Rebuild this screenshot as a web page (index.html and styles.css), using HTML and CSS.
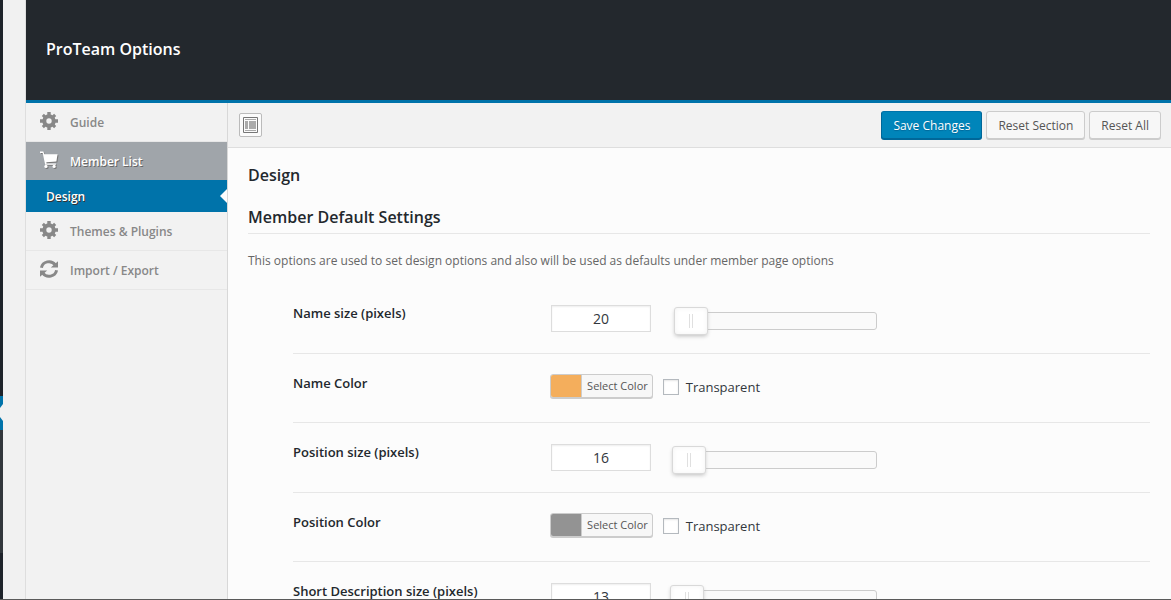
FILE: index.html
```html
<!DOCTYPE html>
<html lang="en">
<head>
<meta charset="utf-8">
<title>ProTeam Options</title>
<link rel="stylesheet" href="styles.css">
</head>
<body>
<svg class="sprite" aria-hidden="true">
  <symbol id="gear" viewBox="0 0 18 18">
    <circle class="ring" cx="9" cy="9" r="4.700"/>
    <path d="M7.300 0h3.400v3.500H7.300zM7.300 14.500h3.400V18H7.300zM0 7.300h3.500v3.400H0zM14.500 7.300H18v3.400h-3.500z"/>
    <path transform="rotate(45 9 9)" d="M7.500 .3h3v3.200h-3zM7.500 14.500h3v3.200h-3zM.3 7.500h3.200v3H.3zM14.500 7.500h3.200v3h-3.200z"/>
  </symbol>
  <symbol id="cart" viewBox="0 0 19 18"><path d="M0 0h3.500l1.200 2.800H18.500L17.300 10.500 6.700 11.500l.2 1.100h9.900v1.400H5.500L2.900 2 2.500 1.500H0z"/><circle cx="6.300" cy="15.800" r="1.700"/><circle cx="14.900" cy="15.800" r="1.700"/></symbol>
  <symbol id="refresh" viewBox="0 0 18 18">
    <path class="arc" d="M1.400 7.800A7.700 7.500 0 0 1 15.200 4.800M16.600 10.200A7.700 7.500 0 0 1 2.800 13.200"/>
    <path d="M18 1.200V7.500H10.800zM0 16.800V10.500H7.200z"/>
  </symbol>
</svg>
<div class="page">
  <div class="admin-menu">
    <div class="admin-menu-top"></div>
    <div class="admin-menu-current"><svg viewBox="0 0 3 34" width="3" height="34" aria-hidden="true"><path d="M3 8v17L0 21v-9z"/></svg></div>
    <div class="admin-menu-sub"></div>
    <div class="admin-menu-rest"></div>
  </div>
  <div class="panel">
    <header class="header"><h1>ProTeam Options</h1></header>
    <div class="columns">
      <nav class="sidebar">
        <ul>
          <li><a class="item" href="#guide"><svg class="icon"><use href="#gear"/></svg>Guide</a></li>
          <li>
            <a class="item item-open" href="#members"><svg class="icon icon-cart"><use href="#cart"/></svg>Member List</a>
            <a class="subitem" href="#design">Design</a>
          </li>
          <li><a class="item" href="#themes"><svg class="icon"><use href="#gear"/></svg>Themes &amp; Plugins</a></li>
          <li><a class="item" href="#import"><svg class="icon"><use href="#refresh"/></svg>Import / Export</a></li>
        </ul>
      </nav>
      <main class="main">
        <div class="toolbar">
          <button class="expand" type="button" aria-label="Expand options"><svg width="15" height="16" viewBox="0 0 15 16" aria-hidden="true"><path class="frame" d="M.5.5h14v15H.5z"/><path class="fill" d="M2 2h11v1H2zM2 4h3v8H2zM6 4h7v8H6zM2 13h11v1H2z"/></svg></button>
          <div class="actions">
            <button class="button primary" type="button">Save Changes</button>
            <button class="button" type="button">Reset Section</button>
            <button class="button" type="button">Reset All</button>
          </div>
        </div>
        <div class="content">
          <h2>Design</h2>
          <h3>Member Default Settings</h3>
          <p class="description">This options are used to set design options and also will be used as defaults under member page options</p>
          <form class="fields">
            <div class="row row-size">
              <label class="label" for="name-size">Name size (pixels)</label>
              <div class="control">
                <input class="number" id="name-size" type="text" value="20">
                <input class="slider" type="range" min="7" max="307" value="20" aria-label="Name size">
              </div>
            </div>
            <div class="row row-color">
              <label class="label" for="name-color">Name Color</label>
              <div class="control">
                <button class="picker" id="name-color" type="button"><span class="swatch orange"></span><span class="picker-text">Select Color</span></button>
                <label class="check"><input type="checkbox">Transparent</label>
              </div>
            </div>
            <div class="row row-size">
              <label class="label" for="position-size">Position size (pixels)</label>
              <div class="control">
                <input class="number" id="position-size" type="text" value="16">
                <input class="slider" type="range" min="7" max="307" value="16" aria-label="Position size">
              </div>
            </div>
            <div class="row row-color">
              <label class="label" for="position-color">Position Color</label>
              <div class="control">
                <button class="picker" id="position-color" type="button"><span class="swatch gray"></span><span class="picker-text">Select Color</span></button>
                <label class="check"><input type="checkbox">Transparent</label>
              </div>
            </div>
            <div class="row row-size">
              <label class="label" for="short-size">Short Description size (pixels)</label>
              <div class="control">
                <input class="number" id="short-size" type="text" value="13">
                <input class="slider" type="range" min="7" max="307" value="13" aria-label="Short Description size">
              </div>
            </div>
          </form>
        </div>
      </main>
    </div>
  </div>
</div>
</body>
</html>
```
FILE: styles.css
```css
* { box-sizing: border-box; }
body {
  margin: 0;
  font: 13px/20px "Open Sans", "Noto Sans", sans-serif;
  color: #23282d;
  background: #f1f1f1;
}
h1, h2, h3, p, ul { margin: 0; padding: 0; }
ul { list-style: none; }
a { text-decoration: none; }
button, input { font: inherit; margin: 0; }
.sprite { display: none; }

.page {
  display: flex;
  height: 100vh;
  overflow: hidden;
  border-bottom: 1px solid #5a5a5a;
}

.admin-menu { display: flex; flex-direction: column; flex: none; width: 3px; margin-right: 22px; background: #1e232a; }
.admin-menu-top { height: 396px; }
.admin-menu-current { height: 34px; background: #0073aa; }
.admin-menu-current svg { display: block; fill: #f1f1f1; }
.admin-menu-sub { height: 123px; background: #32373c; }
.admin-menu-rest { flex: 1; }

.panel { flex: 1; min-width: 0; display: flex; flex-direction: column; border-left: 1px solid #dedede; }
.header {
  display: flex;
  align-items: center;
  flex: none;
  height: 103px;
  padding: 0 20px 2px;
  background: #23282d;
  border-bottom: 3px solid #0073aa;
}
.header h1 { font-size: 16px; line-height: 24px; font-weight: 600; color: #fff; }

.columns { display: flex; flex: 1; min-height: 0; }
.sidebar { flex: none; width: 202px; font-size: 12px; background: #f2f2f2; border-right: 1px solid #d8d8d8; }
.item {
  display: flex;
  align-items: center;
  gap: 12px;
  height: 39px;
  padding: 2px 14px 0;
  font-weight: 600;
  color: #888;
  border-bottom: 1px solid #e7e7e7;
}
.icon { flex: none; width: 18px; height: 18px; margin-bottom: 4px; fill: #888; }
.ring { fill: none; stroke: #888; stroke-width: 4px; }
.arc { fill: none; stroke: #888; stroke-width: 3px; }
.item-open {
  height: 38px;
  color: #fff;
  background: #a0a5aa;
  border-bottom: 0;
  text-shadow: 1px 1px #666;
}
.icon-cart { fill: #fff; filter: drop-shadow(1px 1px 0 #777); }
.subitem {
  position: relative;
  display: block;
  padding: 7px 20px 5px;
  font-weight: 600;
  color: #fff;
  background: #0073aa;
  text-shadow: 1px 1px #333;
}
.subitem::after {
  content: "";
  position: absolute;
  top: 9px;
  right: 0;
  border: 7px solid transparent;
  border-left-width: 0;
  border-right-color: #fcfcfc;
}

.main { flex: 1; min-width: 0; overflow: hidden; background: #fcfcfc; }
.toolbar {
  display: flex;
  justify-content: space-between;
  align-items: flex-start;
  height: 45px;
  padding: 8px 10px 0 11px;
  background: #f2f2f2;
  border-bottom: 1px solid #dedede;
}
.expand {
  display: flex;
  align-items: center;
  justify-content: center;
  width: 23px;
  height: 24px;
  margin-top: 2px;
  padding: 0;
  background: #fbfbfb;
  border: 1px solid #bbb;
  border-radius: 2px;
}
.frame { fill: none; stroke: #777; }
.fill { fill: #aaa; }
.actions { display: flex; gap: 4px; }
.button {
  height: 28px;
  padding: 1px 11px 0;
  font-size: 12px;
  line-height: 26px;
  color: #555;
  background: #f7f7f7;
  border: 1px solid #ccc;
  border-radius: 3px;
  box-shadow: 0 1px #ccc;
}
.primary {
  color: #fff;
  background: #0085ba;
  border-color: #0073aa #006799 #006799;
  box-shadow: 0 1px #006799;
  text-shadow: 0 1px 1px #006799;
}

.content { padding: 15px 21px 0 20px; }
h2, h3 { font-size: 16px; line-height: 24px; font-weight: 600; }
h3 { margin-top: 18px; padding-bottom: 4px; border-bottom: 1px solid #e7e7e7; }
.description { margin-top: 17px; font-size: 12px; color: #666; }
.fields { margin: 13px 0 0 45px; }
.row { display: flex; border-bottom: 1px solid #e7e7e7; }
.row-size { height: 70px; }
.row-color { height: 69px; }
.label { width: 30%; padding-top: 19px; font-weight: 600; }
.control { display: flex; flex: 1; align-items: flex-start; }
.number {
  width: 100px;
  height: 27px;
  margin: 21px 0 0 1px;
  padding: 0 5px;
  font-size: 14px;
  text-align: center;
  color: #32373c;
  background: #fff;
  border: 1px solid #ddd;
  box-shadow: inset 0 1px 2px rgba(0, 0, 0, .07);
}
.slider {
  appearance: none;
  width: 194px;
  height: 28px;
  margin: 23px 0 0 32px;
  background: none;
}
.slider::-webkit-slider-runnable-track {
  height: 18px;
  background: #fafafa;
  border: 1px solid #ccc;
  border-radius: 3px;
}
.slider::-webkit-slider-thumb {
  appearance: none;
  width: 34px;
  height: 28px;
  margin: -6px 0 0 -17px;
  border: 1px solid #d9d9d9;
  border-radius: 3px;
  background:
    linear-gradient(#e0e0e0, #e0e0e0) 14px 6px / 1px 14px no-repeat,
    linear-gradient(#e0e0e0, #e0e0e0) 17px 6px / 1px 14px no-repeat,
    #fff;
  box-shadow: inset 0 0 5px #f2f2f2, 0 2px 4px -1px #bbb;
}
.picker {
  display: flex;
  height: 24px;
  margin-top: 20px;
  padding: 0;
  overflow: hidden;
  font-size: 11px;
  line-height: 22px;
  color: #555;
  background: #f7f7f7;
  border: 1px solid #ccc;
  border-radius: 3px;
  box-shadow: 0 1px #ccc;
}
.swatch { width: 31px; height: 22px; border-right: 1px solid #ccc; }
.orange { background: #f4ae5c; }
.gray { background: #939393; }
.picker-text { padding: 0 4px 0 5px; }
.check { display: flex; align-items: center; gap: 7px; margin: 23px 0 0 10px; color: #32373c; }
.check input {
  appearance: none;
  width: 16px;
  height: 16px;
  background: #fff;
  border: 1px solid #b4b9be;
  box-shadow: inset 0 1px 2px rgba(0, 0, 0, .1);
}
```
